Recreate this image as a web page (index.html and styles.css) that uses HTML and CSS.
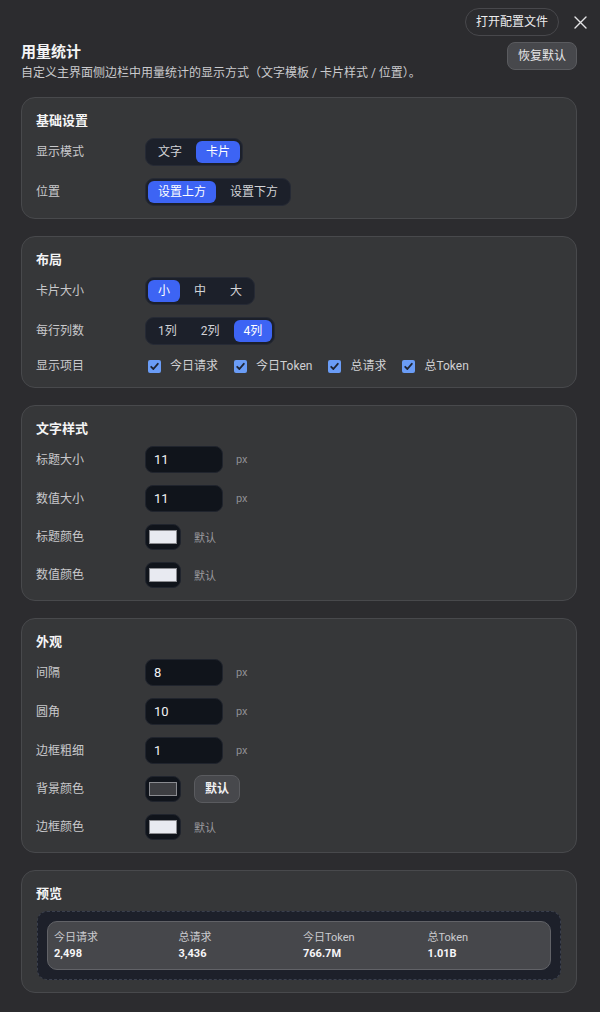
FILE: index.html
```html
<!DOCTYPE html>
<html lang="zh-CN">
<head>
<meta charset="utf-8">
<title>用量统计</title>
<link rel="stylesheet" href="styles.css">
</head>
<body>
<div class="page">
  <div class="topbar">
    <button class="pill-btn">打开配置文件</button>
    <span class="close" aria-label="关闭">
      <svg width="13" height="13" viewBox="0 0 13 13"><path d="M1 1 L12 12 M12 1 L1 12" stroke="#e4e4e6" stroke-width="1.4" fill="none" stroke-linecap="round"/></svg>
    </span>
  </div>

  <div class="header">
    <div class="header-text">
      <div class="title">用量统计</div>
      <div class="subtitle">自定义主界面侧边栏中用量统计的显示方式（文字模板 / 卡片样式 / 位置）。</div>
    </div>
    <button class="btn">恢复默认</button>
  </div>

  <section class="card">
    <div class="card-title">基础设置</div>
    <div class="rows">
      <div class="row">
        <div class="label">显示模式</div>
        <div class="seg"><span class="seg-item">文字</span><span class="seg-item active">卡片</span></div>
      </div>
      <div class="row">
        <div class="label">位置</div>
        <div class="seg"><span class="seg-item active">设置上方</span><span class="seg-item">设置下方</span></div>
      </div>
    </div>
  </section>

  <section class="card">
    <div class="card-title">布局</div>
    <div class="rows">
      <div class="row">
        <div class="label">卡片大小</div>
        <div class="seg"><span class="seg-item active">小</span><span class="seg-item">中</span><span class="seg-item">大</span></div>
      </div>
      <div class="row">
        <div class="label">每行列数</div>
        <div class="seg"><span class="seg-item">1列</span><span class="seg-item">2列</span><span class="seg-item active">4列</span></div>
      </div>
      <div class="row row-check">
        <div class="label">显示项目</div>
        <div class="checks">
          <span class="check"><span class="box"><svg width="13" height="13" viewBox="0 0 13 13"><path d="M3.2 6.8 L5.4 9 L9.8 3.8" stroke="#1f2533" stroke-width="1.8" fill="none" stroke-linecap="round" stroke-linejoin="round"/></svg></span>今日请求</span>
          <span class="check"><span class="box"><svg width="13" height="13" viewBox="0 0 13 13"><path d="M3.2 6.8 L5.4 9 L9.8 3.8" stroke="#1f2533" stroke-width="1.8" fill="none" stroke-linecap="round" stroke-linejoin="round"/></svg></span>今日Token</span>
          <span class="check"><span class="box"><svg width="13" height="13" viewBox="0 0 13 13"><path d="M3.2 6.8 L5.4 9 L9.8 3.8" stroke="#1f2533" stroke-width="1.8" fill="none" stroke-linecap="round" stroke-linejoin="round"/></svg></span>总请求</span>
          <span class="check"><span class="box"><svg width="13" height="13" viewBox="0 0 13 13"><path d="M3.2 6.8 L5.4 9 L9.8 3.8" stroke="#1f2533" stroke-width="1.8" fill="none" stroke-linecap="round" stroke-linejoin="round"/></svg></span>总Token</span>
        </div>
      </div>
    </div>
  </section>

  <section class="card">
    <div class="card-title">文字样式</div>
    <div class="rows">
      <div class="row">
        <div class="label">标题大小</div>
        <div class="input">11</div><span class="unit">px</span>
      </div>
      <div class="row">
        <div class="label">数值大小</div>
        <div class="input">11</div><span class="unit">px</span>
      </div>
      <div class="row">
        <div class="label">标题颜色</div>
        <div class="swatch"><span class="swatch-fill light"></span></div><span class="hint">默认</span>
      </div>
      <div class="row">
        <div class="label">数值颜色</div>
        <div class="swatch"><span class="swatch-fill light"></span></div><span class="hint">默认</span>
      </div>
    </div>
  </section>

  <section class="card">
    <div class="card-title">外观</div>
    <div class="rows">
      <div class="row">
        <div class="label">间隔</div>
        <div class="input">8</div><span class="unit">px</span>
      </div>
      <div class="row">
        <div class="label">圆角</div>
        <div class="input">10</div><span class="unit">px</span>
      </div>
      <div class="row">
        <div class="label">边框粗细</div>
        <div class="input">1</div><span class="unit">px</span>
      </div>
      <div class="row row-btn">
        <div class="label">背景颜色</div>
        <div class="swatch"><span class="swatch-fill dark"></span></div><button class="btn btn-small">默认</button>
      </div>
      <div class="row">
        <div class="label">边框颜色</div>
        <div class="swatch"><span class="swatch-fill light"></span></div><span class="hint">默认</span>
      </div>
    </div>
  </section>

  <section class="card">
    <div class="card-title">预览</div>
    <div class="preview">
      <div class="stats">
        <div class="stat"><div class="stat-label">今日请求</div><div class="stat-value">2,498</div></div>
        <div class="stat"><div class="stat-label">总请求</div><div class="stat-value">3,436</div></div>
        <div class="stat"><div class="stat-label">今日Token</div><div class="stat-value">766.7M</div></div>
        <div class="stat"><div class="stat-label">总Token</div><div class="stat-value">1.01B</div></div>
      </div>
    </div>
  </section>
</div>
</body>
</html>
```

FILE: styles.css
```css
* { box-sizing: border-box; }

html, body {
  margin: 0;
  padding: 0;
  background: #2c2c2f;
}

body {
  font-family: Roboto, "Noto Sans CJK SC", sans-serif;
  color: #e8e8ea;
  font-size: 12px;
}

.page {
  padding: 8px 23px 0 21px;
  display: flex;
  flex-direction: column;
}

.topbar {
  display: flex;
  justify-content: flex-end;
  align-items: center;
  gap: 15px;
  margin-right: -10px;
  height: 28px;
}

.pill-btn {
  font-family: inherit;
  font-size: 12px;
  line-height: 16px;
  color: #ececee;
  background: transparent;
  border: 1px solid #48484c;
  border-radius: 14px;
  height: 28px;
  padding: 0 10px;
  cursor: pointer;
}

.close {
  display: flex;
  width: 13px;
  height: 13px;
}

.header {
  display: flex;
  justify-content: space-between;
  align-items: flex-start;
  margin-top: 6px;
  margin-bottom: 16px;
}

.title {
  font-size: 15px;
  font-weight: 700;
  line-height: 20px;
  color: #f4f4f5;
}

.subtitle {
  margin-top: 3px;
  font-size: 12px;
  line-height: 16px;
  color: #cacacd;
}

.btn {
  font-family: inherit;
  font-size: 12px;
  line-height: 16px;
  color: #e6e6e8;
  background: #47484c;
  border: 1px solid #5a5b5f;
  border-radius: 8px;
  height: 28px;
  padding: 0 10px;
  cursor: pointer;
}

.btn-small {
  font-weight: 700;
  color: #f2f2f4;
}

.row-btn {
  height: 26px;
}

.card {
  background: #363739;
  border: 1px solid #48494c;
  border-radius: 14px;
  padding: 14px 14px 12px;
  display: flex;
  flex-direction: column;
  gap: 8px;
  margin-bottom: 17px;
}

.card-title {
  font-size: 13px;
  font-weight: 700;
  line-height: 18px;
  color: #f4f4f5;
}

.rows {
  display: flex;
  flex-direction: column;
  gap: 12px;
}

.row {
  display: flex;
  align-items: center;
}

.label {
  width: 109px;
  flex-shrink: 0;
  font-size: 12px;
  line-height: 16px;
  color: #c9c9cc;
}

.seg {
  display: flex;
  gap: 4px;
  height: 28px;
  padding: 2px;
  background: #1c202a;
  border: 1px solid #262a35;
  border-radius: 9px;
}

.seg-item {
  display: flex;
  align-items: center;
  height: 22px;
  padding: 0 10px;
  border-radius: 6px;
  font-size: 12px;
  line-height: 16px;
  color: #d2d3d7;
}

.seg-item.active {
  background: #3d64f4;
  color: #ffffff;
}

.row-check {
  height: 18px;
}

.checks {
  display: flex;
  align-items: center;
  gap: 16px;
  padding-left: 3px;
}

.check {
  display: inline-flex;
  align-items: center;
  gap: 9px;
  font-size: 12px;
  line-height: 16px;
  color: #d0d0d3;
}

.box {
  display: flex;
  width: 13px;
  height: 13px;
  border-radius: 2px;
  background: #6a9cf6;
}

.input {
  width: 78px;
  height: 27px;
  display: flex;
  align-items: center;
  padding-left: 8px;
  background: #10141b;
  border: 1px solid #20242d;
  border-radius: 8px;
  font-size: 13px;
  color: #f2f2f4;
}

.unit {
  margin-left: 13px;
  font-size: 11px;
  color: #8f8f94;
}

.swatch {
  width: 36px;
  height: 26px;
  display: flex;
  align-items: center;
  justify-content: center;
  background: #10141b;
  border: 1px solid #20242d;
  border-radius: 8px;
  margin-right: 13px;
}

.swatch-fill {
  width: 28px;
  height: 14px;
  border: 1px solid #8a8b90;
}

.swatch-fill.light { background: #e8eaf1; }
.swatch-fill.dark { background: #3d3e42; }

.hint {
  font-size: 11px;
  color: #9a9a9f;
}

.preview {
  background: #1d202a;
  border: 1px dashed #3a3f4d;
  border-radius: 10px;
  padding: 9px;
  margin: 0 1px;
}

.stats {
  display: grid;
  grid-template-columns: repeat(4, 1fr);
  gap: 8px;
  background: #46474b;
  border: 1px solid #616267;
  border-radius: 10px;
  padding: 9px 6px 8px;
}

.stat-label {
  font-size: 11px;
  line-height: 14px;
  color: #cbcbcf;
}

.stat-value {
  margin-top: 2px;
  font-size: 11px;
  line-height: 14px;
  font-weight: 700;
  color: #f6f6f8;
}
```
